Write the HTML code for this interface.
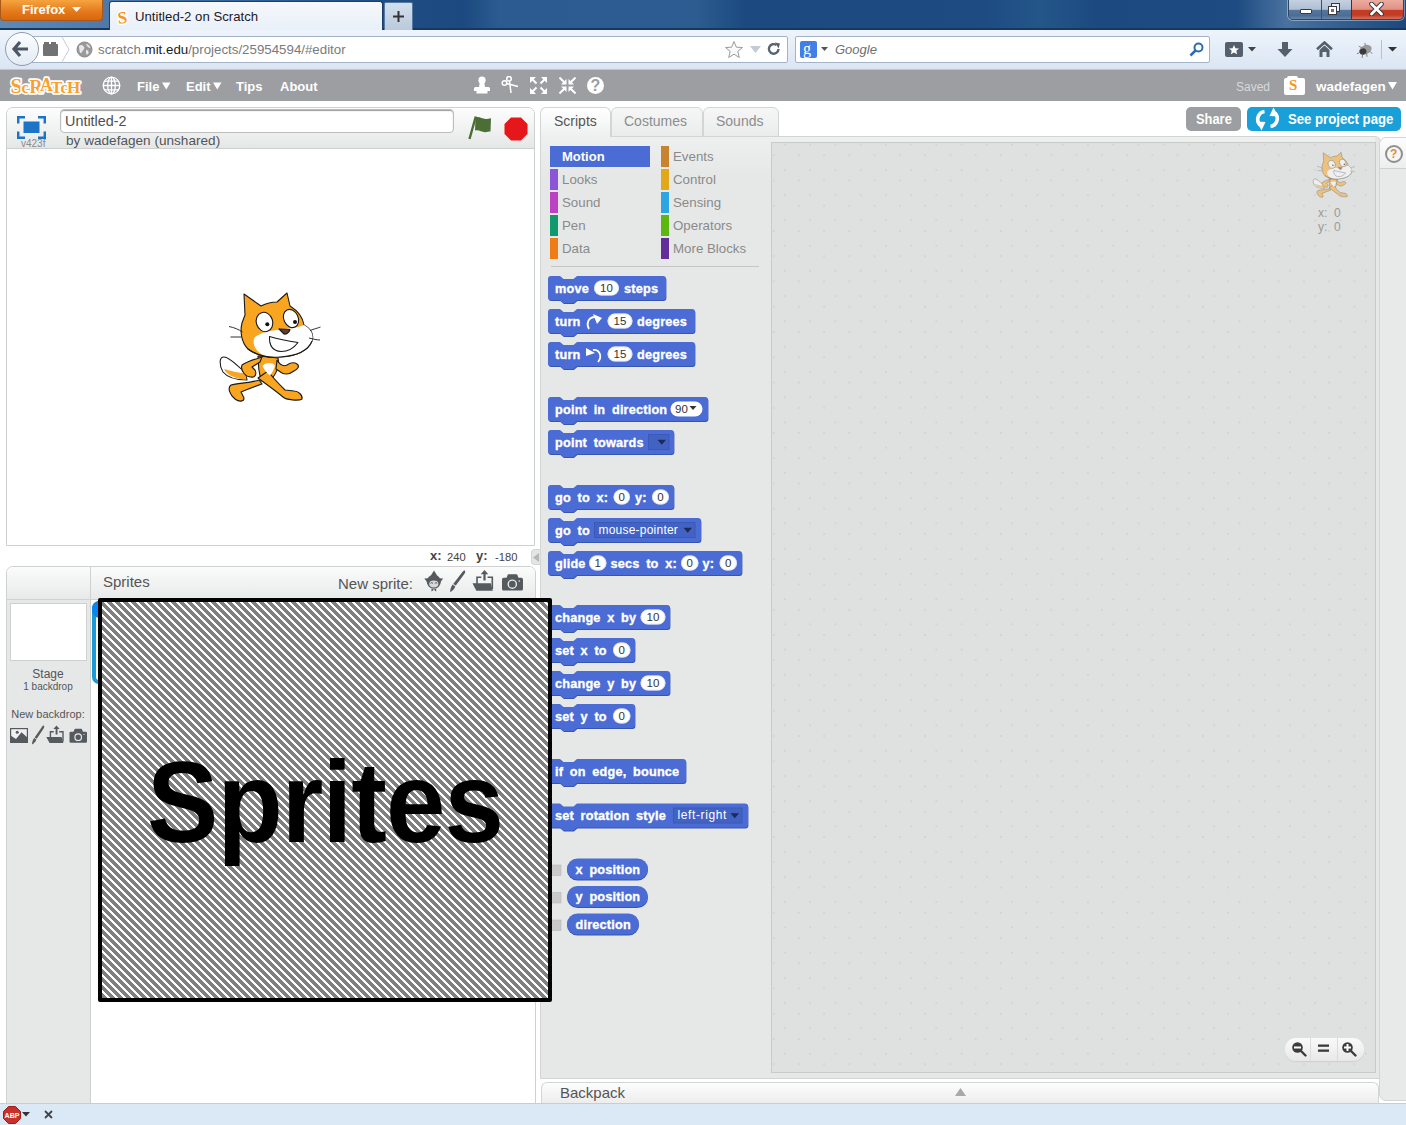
<!DOCTYPE html><html><head><meta charset="utf-8"><title>Scratch</title><style>
*{box-sizing:border-box;margin:0;padding:0}
html,body{width:1406px;height:1125px;overflow:hidden;background:#fff;font-family:"Liberation Sans",sans-serif;position:relative}
.a{position:absolute}
.t{position:absolute;white-space:nowrap;line-height:1}
</style></head><body><div class="a" style="left:0;top:0;width:1406px;height:30px;background:linear-gradient(90deg,#6089b5 0%,#4f7aab 7%,#204d84 27%,#1c4a80 33%,#2b5b90 35.5%,#2c5c90 49.5%,#1c4a80 53%,#1d4b82 70%,#245689 74%,#1c4a80 78%,#1e4c82 88%,#4a72a0 91.5%,#1c487c 100%)"></div><div class="a" style="left:0;top:28px;width:1406px;height:2px;background:#17375e"></div><div class="a" style="left:0;top:0;width:103px;height:21px;border-radius:0 0 4px 4px;background:linear-gradient(#f6a43f,#e3781a 60%,#d8680c);border:1px solid #a9581a;border-top:none"></div><div class="t" style="left:22px;top:3px;font-size:13px;font-weight:bold;color:#fff">Firefox</div><svg class="a" style="left:72px;top:7px" width="9" height="6"><path d="M0,0H9L4.5,5Z" fill="#fff"/></svg><div class="a" style="left:109px;top:1px;width:274px;height:29px;border-radius:3px 3px 0 0;background:linear-gradient(#f5f8fc,#e9f0f8);border:1px solid #1a3f6a;border-bottom:none"></div><svg class="a" style="left:114px;top:5px" width="20" height="22"><text x="3.5" y="18" font-size="17" font-weight="bold" font-family="Liberation Serif" fill="#f7931e" stroke="#fff" stroke-width="3" paint-order="stroke" transform="rotate(-6 10 11)">S</text></svg><div class="t" style="left:135px;top:9.5px;font-size:13.2px;color:#1a1a2a">Untitled-2 on Scratch</div><div class="a" style="left:384px;top:2px;width:29px;height:28px;border-radius:2px 2px 0 0;background:linear-gradient(#d3dfec,#b9cadc);border:1px solid #557aa3;border-bottom:none"></div><svg class="a" style="left:392px;top:10px" width="13" height="13"><path d="M6.5,1V12M1,6.5H12" stroke="#333" stroke-width="2"/></svg><div class="a" style="left:1288px;top:-1px;width:116px;height:21px;border-radius:0 0 5px 5px;border:1px solid #2f4560;overflow:hidden;box-shadow:0 0 0 1px rgba(220,230,240,0.45)"><div class="a" style="left:0;top:0;width:32px;height:20px;background:linear-gradient(#c4d0df 0%,#aebfd3 47%,#56779d 50%,#4d6d94 78%,#6f8db0 100%)"></div><div class="a" style="left:32px;top:0;width:1px;height:20px;background:#3a5272"></div><div class="a" style="left:33px;top:0;width:29px;height:20px;background:linear-gradient(#c4d0df 0%,#aebfd3 47%,#56779d 50%,#4d6d94 78%,#6f8db0 100%)"></div><div class="a" style="left:62px;top:0;width:1px;height:20px;background:#5a2a20"></div><div class="a" style="left:63px;top:0;width:52px;height:20px;background:linear-gradient(#ecaca0 0%,#df9083 47%,#c43c24 50%,#c13b22 75%,#d98070 100%)"></div></div><div class="a" style="left:1300px;top:9px;width:12px;height:5px;background:#fff;border:1px solid #3a3a3a;border-radius:1px"></div><svg class="a" style="left:1327px;top:2px" width="15" height="15"><rect x="4.5" y="1.5" width="8" height="8" fill="#e8eef5" stroke="#3a3a3a" stroke-width="1"/><rect x="1.5" y="4.5" width="8" height="8" fill="#fff" stroke="#3a3a3a" stroke-width="1"/><rect x="4" y="7" width="3" height="3" fill="#56779d"/></svg><svg class="a" style="left:1369px;top:2px" width="15" height="14"><path d="M2.5,2L12.5,12M12.5,2L2.5,12" stroke="#3a3a3a" stroke-width="4.6" stroke-linecap="round"/><path d="M2.5,2L12.5,12M12.5,2L2.5,12" stroke="#fff" stroke-width="2.8" stroke-linecap="round"/></svg><div class="a" style="left:0;top:30px;width:1406px;height:40px;background:linear-gradient(#eef4fb,#e2ebf6 60%,#dae6f3)"></div><div class="a" style="left:0;top:69px;width:1406px;height:1px;background:#b9c6d6"></div><div class="a" style="left:30px;top:36px;width:758px;height:27px;background:#fff;border:1px solid #a4b4c6;border-radius:2px"></div><div class="a" style="left:5px;top:32px;width:34px;height:34px;border-radius:50%;background:linear-gradient(#fbfdff,#e3ebf4);border:1px solid #8d9db0"></div><svg class="a" style="left:11px;top:40px" width="20" height="18"><path d="M9,2L3,9L9,16M3.5,9H17" stroke="#4d5866" stroke-width="3.2" fill="none" stroke-linejoin="miter"/></svg><div class="a" style="left:43px;top:44px;width:15px;height:12px;background:#727272;border-radius:1px"></div><div class="a" style="left:44px;top:42px;width:5px;height:2px;background:#727272"></div><div class="a" style="left:51px;top:42px;width:5px;height:2px;background:#727272"></div><svg class="a" style="left:61px;top:37px" width="10" height="25"><path d="M1,0L8,12.5L1,25" stroke="#c4ccd6" fill="none"/></svg><svg class="a" style="left:76px;top:41px" width="17" height="17"><circle cx="8.5" cy="8.5" r="7.5" fill="#9a9a9a"/><path d="M3,5C5,3 7,4 8,6C9,8 7,9 6,11C5,13 4,12 3.5,10Z M10,3C12,3 14,5 14.5,7C13,7 12,6 11,5Z M10,9C12,9 13,10 12.5,12.5C11.5,14 10,13.5 10,12Z" fill="#e8e8e8"/><circle cx="8.5" cy="8.5" r="7.5" fill="none" stroke="#8a8a8a" stroke-width="1"/></svg><div class="t" style="left:98px;top:43px;font-size:13.3px;color:#7a7a7a">scratch.<span style="color:#1a1a1a">mit.edu</span>/projects/25954594/#editor</div><svg class="a" style="left:724px;top:40px" width="20" height="19"><path d="M10,1.5L12.4,7.2L18.5,7.5L13.8,11.4L15.3,17.5L10,14.2L4.7,17.5L6.2,11.4L1.5,7.5L7.6,7.2Z" fill="#fafafa" stroke="#9a9a9a" stroke-width="1"/></svg><svg class="a" style="left:750px;top:46px" width="11" height="8"><path d="M0,0H11L5.5,7Z" fill="#c2cbd6"/></svg><svg class="a" style="left:767px;top:42px" width="14" height="14"><path d="M11.5,7A4.8,4.8 0 1 1 9.5,3" stroke="#5a6470" stroke-width="2.4" fill="none"/><path d="M8,0.5L13,1.5L11.5,6.5Z" fill="#5a6470"/></svg><div class="a" style="left:795px;top:36px;width:415px;height:27px;background:#fff;border:1px solid #a4b4c6;border-radius:2px"></div><div class="a" style="left:800px;top:41px;width:17px;height:17px;background:#3f7fe6;border-radius:2px"></div><div class="t" style="left:803px;top:41px;font-size:16px;color:#fff;font-family:'Liberation Serif',serif">g</div><svg class="a" style="left:821px;top:47px" width="7" height="5"><path d="M0,0H7L3.5,4Z" fill="#555"/></svg><div class="t" style="left:835px;top:43px;font-size:13px;color:#707070;font-style:italic">Google</div><svg class="a" style="left:1189px;top:42px" width="15" height="15"><circle cx="9.5" cy="5.5" r="4" stroke="#2b6cb4" stroke-width="2" fill="none"/><path d="M6.5,8.5L1.5,13.5" stroke="#2b6cb4" stroke-width="2.5"/></svg><div class="a" style="left:1225px;top:42px;width:18px;height:15px;background:#55606c;border-radius:2px"></div><svg class="a" style="left:1227px;top:43px" width="14" height="13"><path d="M7,2L8.4,5.3L12,5.6L9.3,7.8L10.1,11.3L7,9.4L3.9,11.3L4.7,7.8L2,5.6L5.6,5.3Z" fill="#fff"/></svg><svg class="a" style="left:1248px;top:47px" width="8" height="5"><path d="M0,0H8L4,4.5Z" fill="#444"/></svg><svg class="a" style="left:1277px;top:42px" width="16" height="16"><path d="M5,0H11V7H15.5L8,15L0.5,7H5Z" fill="#55606c"/></svg><svg class="a" style="left:1316px;top:41px" width="17" height="17"><path d="M1,8.2L8.5,1.5L16,8.2" stroke="#55606c" stroke-width="2.6" fill="none"/><path d="M3.5,9L8.5,4.5L13.5,9V16H10.5V11H6.5V16H3.5Z" fill="#55606c"/></svg><svg class="a" style="left:1355px;top:41px" width="20" height="18"><g transform="rotate(-25 10 9)"><ellipse cx="10.5" cy="9" rx="6.5" ry="4.5" fill="#9a9a9a"/><ellipse cx="7.5" cy="9.5" rx="3.5" ry="3" fill="#3a3a3a"/><path d="M4,9H1M6,12L4,15M10,13L9,16M14,12.5L15,15.5M8,5.5L6,3M12,5L13,2.5" stroke="#777" stroke-width="0.8"/></g></svg><div class="a" style="left:1381px;top:40px;width:1px;height:19px;background:#b5c2d0"></div><svg class="a" style="left:1388px;top:47px" width="9" height="5"><path d="M0,0H9L4.5,4.5Z" fill="#333"/></svg><div class="a" style="left:0;top:70px;width:1406px;height:31px;background:#9c9ea2"></div><svg class="a" style="left:0;top:70px" width="90" height="31" viewBox="0 70 90 31"><g font-family="Liberation Serif" font-weight="bold" fill="#f9a12e" stroke="#fff" stroke-width="3.4" stroke-linejoin="round" paint-order="stroke" transform="translate(0,0)"><text x="10.5" y="93" font-size="21">S</text><text x="21.5" y="93" font-size="16">c</text><text x="29.5" y="93" font-size="18">R</text><text x="40" y="91" font-size="18">A</text><text x="51" y="93" font-size="17">T</text><text x="60.5" y="93" font-size="16">c</text><text x="67" y="93" font-size="17">H</text></g></svg><svg class="a" style="left:102px;top:76px" width="19" height="19"><g stroke="#fff" stroke-width="1.3" fill="none"><circle cx="9.5" cy="9.5" r="8.3"/><ellipse cx="9.5" cy="9.5" rx="3.8" ry="8.3"/><path d="M9.5,1.2V17.8M1.2,9.5H17.8M2.6,5.2H16.4M2.6,13.8H16.4"/></g></svg><div class="t" style="left:137px;top:80px;font-size:13px;font-weight:bold;color:#fff">File</div><svg class="a" style="left:162px;top:82px" width="9" height="8"><path d="M0,0.5H8.5L4.25,7.5Z" fill="#fff"/></svg><div class="t" style="left:186px;top:80px;font-size:13px;font-weight:bold;color:#fff">Edit</div><svg class="a" style="left:213px;top:82px" width="9" height="8"><path d="M0,0.5H8.5L4.25,7.5Z" fill="#fff"/></svg><div class="t" style="left:236px;top:80px;font-size:13px;font-weight:bold;color:#fff">Tips</div><div class="t" style="left:280px;top:80px;font-size:13px;font-weight:bold;color:#fff">About</div><svg class="a" style="left:473px;top:76px" width="18" height="19"><g fill="#fff"><circle cx="9" cy="4.2" r="3.6"/><path d="M6.8,6H11.2L12,11H6Z"/><path d="M2.5,11H15.5Q17,11 17,12.5V15H14.5V17.5H3.5V15H1V12.5Q1,11 2.5,11Z"/></g></svg><svg class="a" style="left:501px;top:76px" width="18" height="18"><g stroke="#fff" stroke-width="1.5" fill="none"><circle cx="3.5" cy="7" r="2.3"/><circle cx="8" cy="2.8" r="2.3"/><path d="M5.5,7.5L17,10.5M8.5,5L10,17"/></g></svg><svg class="a" style="left:530px;top:77px" width="17" height="17"><g fill="#fff"><path d="M0,0H6L0,6Z"/><path d="M17,0H11L17,6Z"/><path d="M0,17H6L0,11Z"/><path d="M17,17H11L17,11Z"/></g><g stroke="#fff" stroke-width="2"><path d="M2,2L6.5,6.5M15,2L10.5,6.5M2,15L6.5,10.5M15,15L10.5,10.5"/></g></svg><svg class="a" style="left:559px;top:77px" width="17" height="17"><g fill="#fff"><path d="M7.5,7.5H2L7.5,2Z"/><path d="M9.5,7.5H15L9.5,2Z"/><path d="M7.5,9.5H2L7.5,15Z"/><path d="M9.5,9.5H15L9.5,15Z"/></g><g stroke="#fff" stroke-width="2"><path d="M0.5,0.5L5,5M16.5,0.5L12,5M0.5,16.5L5,12M16.5,16.5L12,12"/></g></svg><div class="a" style="left:587px;top:77px;width:17px;height:17px;border-radius:50%;background:#fff"></div><div class="t" style="left:590.5px;top:78px;font-size:16px;font-weight:bold;color:#9c9ea2">?</div><div class="t" style="left:1236px;top:81px;font-size:12px;color:#d9d9d9">Saved</div><div class="a" style="left:1284px;top:78px;width:21px;height:17px;background:#fff;border-radius:2px"></div><div class="a" style="left:1287px;top:76px;width:11px;height:3px;background:#fff;border-radius:2px 2px 0 0"></div><div class="t" style="left:1289px;top:78px;font-size:15px;font-weight:bold;color:#f7941d;font-family:'Liberation Serif',serif">S</div><div class="t" style="left:1316px;top:80px;font-size:13.5px;font-weight:bold;color:#fff">wadefagen</div><svg class="a" style="left:1388px;top:82px" width="9" height="8"><path d="M0,0H9L4.5,7.5Z" fill="#fff"/></svg><div class="a" style="left:6px;top:107px;width:529px;height:439px;border:1px solid #cfd1d1;border-radius:7px 7px 0 0;background:#fff;overflow:hidden"><div class="a" style="left:0;top:0;width:527px;height:41px;background:linear-gradient(#fdfdfd,#e5e7e7);border-bottom:1px solid #cdd0d0"></div></div><svg class="a" style="left:17px;top:116px" width="29" height="23"><g fill="none" stroke="#1b74c4" stroke-width="2.5"><path d="M1.2,7.5V1.2H8M21,1.2H27.8V7.5M1.2,15.5V21.8H8M21,21.8H27.8V15.5"/></g><rect x="6.5" y="5.5" width="16" height="11.5" fill="#1b74c4"/></svg><div class="t" style="left:21px;top:139px;font-size:10px;color:#8a8a8a">v423f</div><div class="a" style="left:60px;top:109px;width:394px;height:24px;background:#fff;border:1px solid #bdbdbd;border-radius:4px;box-shadow:inset 0 1px 1px #999"></div><div class="t" style="left:65px;top:114px;font-size:14.4px;color:#505050">Untitled-2</div><div class="t" style="left:66px;top:134px;font-size:13.6px;color:#555">by wadefagen (unshared)</div><svg class="a" style="left:467px;top:115px" width="26" height="26"><path d="M8.5,2.5C12,1 15,4 18.5,4C20.5,4 22.5,3.2 24,3.2L23.5,16.5C21.5,16.5 20,17.2 18,17.2C14.5,17.2 12,14.5 8,15.5Z" fill="#4a6e35"/><path d="M8.8,1.5L2.5,24" stroke="#4a6e35" stroke-width="2.4"/></svg><svg class="a" style="left:504px;top:117px" width="24" height="24"><path d="M7,0.5H17L23.5,7V17L17,23.5H7L0.5,17V7Z" fill="#e6171b"/></svg><svg class="a" style="left:210px;top:285px" width="120" height="125" viewBox="0 0 120 125"><g stroke="#1a1a1a" stroke-width="1.1" stroke-linejoin="round">
<path d="M35,87 C28,82 20,72 14,72 C9,72 9,80 13,87 C17,92 26,95 37,95 Z" fill="#fff"/>
<path d="M14.5,85 C18,91 27,94 36.5,94.5 L35,88.5 C28,88 21,86 14.5,84Z" fill="#f9a51f" stroke="none"/>
<path d="M48,71 L68,73 C70,79 67,87 62,94 L51,96 C49,88 48,79 48,71Z" fill="#f9a51f"/>
<path d="M49,95 C40,98 28,98 21,100 C17,103 20,110 25,114 C29,117 34,117 34,113 L31,107 C38,104 46,101 52,99Z" fill="#f9a51f"/>
<path d="M48,93 C56,99 66,106 73,112 C76,115 89,116 92,114 C93,110 88,106 84,106 L75,105 C68,98 62,92 58,86Z" fill="#f9a51f"/>
<path d="M52,72 C46,74 38,76 32,80 C30,86 36,92 41,92 C45,93 47,89 45,85 L42,82 L50,77Z" fill="#f9a51f"/>
<path d="M52.5,81 C55,77.5 62,77 65,80.5 C64,84 62,88 60,90.5 C57,88 54,84.5 52.5,81Z" fill="#fff" stroke="none"/>
<path d="M67,75 C70,80 73,82 77,80 C80,78 84,77 87,79 C90,81 88,84 84,86 C80,89 76,90 72,88 L66,84Z" fill="#f9a51f"/>
<path d="M35,30 L34,9 L51,21 C57,18 62,17 67,17 L77,8 L80,21 C88,26 93,33 94,40 C101,44 104,50 102,56 C98,66 85,71 70,72 C58,73 46,70 38,64 C31,57 30,46 32,38Z" fill="#f9a51f"/>
<path d="M45,52 C52,47 60,46 66,45 C75,44 88,43 94,40 C101,44 104,50 102,56 C98,66 85,71 70,72 C58,73 50,70 46,64 C43,60 43,55 45,52Z" fill="#fff" stroke="none"/>
<path d="M38,64 C46,70 58,73 70,72 C85,71 98,66 102,56" fill="none"/>
<ellipse cx="54.5" cy="37" rx="8.2" ry="9.8" transform="rotate(-18 54.5 37)" fill="#fff"/>
<ellipse cx="81" cy="33.5" rx="7.2" ry="9.5" transform="rotate(-25 81 33.5)" fill="#fff"/>
<circle cx="57.3" cy="39.3" r="2" fill="#111" stroke="none"/>
<circle cx="85" cy="37" r="2" fill="#111" stroke="none"/>
<path d="M69,44 L80,44.5 C79,48 76,49.5 74,49 Z" fill="#5a4036"/>
<path d="M59.5,51.5 C68,54 78,56 88,57.5 C84,63 78,66.5 71,66.5 C64,66 59,62 59.5,51.5Z" fill="#fff"/>
<path d="M19,41.5 C24,42.5 29,44.5 32.5,47 M20.5,52 L31,52 M100,45.5 C104,44 108,43 110.5,42 M99,53 C103,54 107,55 110,55" fill="none" stroke-width="0.9"/>
</g></svg><div class="t" style="left:430px;top:549px;font-size:13px;font-weight:bold;color:#444">x:</div><div class="t" style="left:447px;top:551.5px;font-size:11.2px;color:#444">240</div><div class="t" style="left:476px;top:549px;font-size:13px;font-weight:bold;color:#444">y:</div><div class="t" style="left:495px;top:551.5px;font-size:11.2px;color:#444">-180</div><div class="a" style="left:531px;top:549px;width:10px;height:16px;background:#e4e6e6;border-radius:4px 0 0 4px;border:1px solid #d4d6d6;border-right:none"></div><svg class="a" style="left:533px;top:553px" width="6" height="9"><path d="M6,0V9L0,4.5Z" fill="#b4b6b8"/></svg><div class="a" style="left:6px;top:566px;width:530px;height:538px;border:1px solid #cfd1d1;border-radius:7px 7px 0 0;background:#fff;overflow:hidden"><div class="a" style="left:0;top:0;width:528px;height:33px;background:linear-gradient(#fbfbfb,#e8eaea);border-bottom:1px solid #d0d2d2"></div><div class="a" style="left:0;top:33px;width:83px;height:510px;background:#e6e8e8"></div><div class="a" style="left:83px;top:0;width:1px;height:540px;background:#cfd1d1"></div></div><div class="t" style="left:103px;top:574px;font-size:15px;color:#555">Sprites</div><div class="t" style="left:338px;top:576px;font-size:15px;color:#555">New sprite:</div><svg class="a" style="left:424px;top:570px" width="20" height="22"><path d="M6.3,6.5 L10,0.5 L13.7,6.5Z" fill="#555a5e"/><path d="M0.3,8.5 L5,8.3 L5,14.5Z M19.2,8.5 L14.5,8.3 L14.5,14.5Z" fill="#555a5e"/><circle cx="9.8" cy="11.8" r="7" fill="#555a5e"/><ellipse cx="9.8" cy="14" rx="4.6" ry="3.4" fill="#d9d9d9"/><path d="M6.5,13.2 Q8,12 9,13.4 M10.8,13.4 Q12,12 13.2,13.2" stroke="#555a5e" stroke-width="1" fill="none"/><path d="M7.5,18.5 L10,19.8 L7.5,21.5Z M12.2,18.5 L9.8,19.8 L12.2,21.5Z" fill="#555a5e"/></svg><svg class="a" style="left:449px;top:570px" width="17" height="23"><path d="M15.9,0.7 C16.6,1.3 16.3,2.4 15.3,3.9 L6.8,15.6 L4.2,13.9 L13.4,2.1 C14.4,0.8 15.2,0.2 15.9,0.7Z" fill="#555a5e"/><path d="M3.6,14.6 L6.3,16.4 C5.3,19.2 3.2,21.3 1,22 C1.3,19.6 2,16.6 3.6,14.6Z" fill="#555a5e"/></svg><svg class="a" style="left:472px;top:569px" width="22" height="23"><path d="M12.5,1 L16.3,5.2 H13.6 V11.5 H11.4 V5.2 H8.7 Z" fill="#555a5e"/><path d="M5,15 V8.2 H9.3 M15.6,8.2 H20.3 V20" stroke="#555a5e" stroke-width="1.6" fill="none"/><path d="M0.5,14.3 H18.8 L20.8,21.8 H4.3 Z" fill="#555a5e"/></svg><svg class="a" style="left:501px;top:573px" width="23" height="19"><rect x="1" y="4.8" width="21" height="12.8" rx="1.6" fill="#555a5e"/><path d="M5.3,5.5 L6.8,1.6 Q7,1.2 7.6,1.2 H15.4 Q16,1.2 16.2,1.6 L17.7,5.5Z" fill="#555a5e"/><circle cx="11.3" cy="11.2" r="4.1" fill="none" stroke="#e9e9e9" stroke-width="1.4"/><circle cx="18.3" cy="8" r="0.8" fill="#e9e9e9"/></svg><div class="a" style="left:10px;top:603px;width:77px;height:58px;background:#fff;border:1px solid #cfd1d1"></div><div class="t" style="left:0;top:668px;width:96px;text-align:center;font-size:12px;color:#555">Stage</div><div class="t" style="left:0;top:682px;width:96px;text-align:center;font-size:10px;color:#555">1 backdrop</div><div class="t" style="left:0;top:709px;width:96px;text-align:center;font-size:11px;color:#555">New backdrop:</div><svg class="a" style="left:10px;top:728px" width="18" height="15"><rect x="0.6" y="0.6" width="16.8" height="13.8" fill="#f0f0f0" stroke="#555a5e" stroke-width="1.2"/><path d="M0.6,7.5 L6,11 L11.5,4.3 L17.4,9.5 V14.4 H0.6Z" fill="#555a5e"/><circle cx="7.2" cy="4.2" r="1.5" fill="#555a5e"/></svg><svg class="a" style="left:31px;top:725px" width="14" height="20"><path d="M12.9,0.8 C13.5,1.3 13.3,2.3 12.6,3.6 L5.8,13.8 L3.6,12.4 L10.9,1.9 C11.7,0.8 12.3,0.3 12.9,0.8Z" fill="#555a5e"/><path d="M3.1,13 L5.4,14.6 C4.6,17 2.8,18.8 0.9,19.4 C1.1,17.3 1.8,14.7 3.1,13Z" fill="#555a5e"/></svg><svg class="a" style="left:46px;top:725px" width="19" height="19"><path d="M10.5,0.5 L13.6,4 H11.5 V9.5 H9.6 V4 H7.4 Z" fill="#555a5e"/><path d="M4.4,12.5 V6.8 H7.8 M13.2,6.8 H17 V16.5" stroke="#555a5e" stroke-width="1.4" fill="none"/><path d="M0.3,12 H15.6 L17.4,18 H3.6 Z" fill="#555a5e"/></svg><svg class="a" style="left:69px;top:728px" width="19" height="16"><rect x="0.5" y="3.8" width="17.5" height="11" rx="1.3" fill="#555a5e"/><path d="M4.3,4.4 L5.5,1.2 Q5.7,0.8 6.2,0.8 H12.3 Q12.8,0.8 13,1.2 L14.2,4.4Z" fill="#555a5e"/><circle cx="9.2" cy="9.2" r="3.3" fill="none" stroke="#e9e9e9" stroke-width="1.2"/><circle cx="15" cy="6.5" r="0.6" fill="#e9e9e9"/></svg><div class="a" style="left:92px;top:601px;width:60px;height:83px;border:4px solid #1c9ad6;border-radius:7px;background:#fff"></div><div class="a" style="left:92px;top:601px;width:16px;height:17px;border-radius:8px 0 8px 8px;background:#0a84ee"></div><div class="t" style="left:1196px;top:112px;font-size:14px;font-weight:bold;color:#fff"></div><div class="a" style="left:1186px;top:107px;width:55px;height:24px;border-radius:5px;background:#9c9ea2"></div><div class="t" style="left:1196px;top:112px;font-size:14px;font-weight:bold;color:#fff;transform:scaleX(0.92);transform-origin:0 0">Share</div><div class="a" style="left:1247px;top:107px;width:154px;height:24px;border-radius:5px;background:#1aa0d9"></div><svg class="a" style="left:1253px;top:107px" width="29" height="24"><g fill="none" stroke="#fff" stroke-width="3.6"><path d="M11.5,4.5 A8,8 0 0 0 7,18"/><path d="M17.5,19.5 A8,8 0 0 0 22,6"/></g><g fill="#fff"><path d="M3.5,14.5 L12.5,15 L8.5,23.5Z"/><path d="M25.5,9.5 L16.5,9 L20.5,0.5Z"/></g></svg><div class="t" style="left:1288px;top:112px;font-size:14px;font-weight:bold;color:#fff;transform:scaleX(0.94);transform-origin:0 0">See project page</div><div class="a" style="left:540px;top:136px;width:841px;height:943px;background:#e6e8e8;border:1px solid #d3d5d5;border-radius:0 6px 0 0"></div><div class="a" style="left:541px;top:137px;width:834px;height:40px;background:linear-gradient(#eef0f0,#e6e8e8)"></div><div class="a" style="left:611px;top:107px;width:92px;height:30px;border:1px solid #d3d5d5;border-bottom:1px solid #d3d5d5;border-radius:6px 6px 0 0;background:linear-gradient(#f6f6f6,#eaecec)"></div><div class="t" style="left:624px;top:114px;font-size:14px;color:#8d8d8d">Costumes</div><div class="a" style="left:703px;top:107px;width:76px;height:30px;border:1px solid #d3d5d5;border-bottom:1px solid #d3d5d5;border-radius:6px 6px 0 0;background:linear-gradient(#f6f6f6,#eaecec)"></div><div class="t" style="left:716px;top:114px;font-size:14px;color:#8d8d8d">Sounds</div><div class="a" style="left:540px;top:107px;width:71px;height:30px;border:1px solid #d3d5d5;border-bottom:none;border-radius:6px 6px 0 0;background:linear-gradient(#ffffff,#eef0f0)"></div><div class="t" style="left:554px;top:114px;font-size:14px;color:#555">Scripts</div><div class="a" style="left:542px;top:136px;width:68px;height:2px;background:#eef0f0"></div><div class="a" style="left:550px;top:146px;width:100px;height:21px;background:#4a6cd4"></div><div class="t" style="left:562px;top:150px;font-size:13px;font-weight:bold;color:#fff">Motion</div><div class="a" style="left:550px;top:169px;width:8px;height:21px;background:#8a55d7"></div><div class="t" style="left:562px;top:173px;font-size:13.3px;color:#8a8a8a">Looks</div><div class="a" style="left:550px;top:192px;width:8px;height:21px;background:#bb42c3"></div><div class="t" style="left:562px;top:196px;font-size:13.3px;color:#8a8a8a">Sound</div><div class="a" style="left:550px;top:215px;width:8px;height:21px;background:#0e9a6c"></div><div class="t" style="left:562px;top:219px;font-size:13.3px;color:#8a8a8a">Pen</div><div class="a" style="left:550px;top:238px;width:8px;height:21px;background:#ee7d16"></div><div class="t" style="left:562px;top:242px;font-size:13.3px;color:#8a8a8a">Data</div><div class="a" style="left:661px;top:146px;width:8px;height:21px;background:#c88330"></div><div class="t" style="left:673px;top:150px;font-size:13.3px;color:#8a8a8a">Events</div><div class="a" style="left:661px;top:169px;width:8px;height:21px;background:#e1a91a"></div><div class="t" style="left:673px;top:173px;font-size:13.3px;color:#8a8a8a">Control</div><div class="a" style="left:661px;top:192px;width:8px;height:21px;background:#2ca5e2"></div><div class="t" style="left:673px;top:196px;font-size:13.3px;color:#8a8a8a">Sensing</div><div class="a" style="left:661px;top:215px;width:8px;height:21px;background:#5cb712"></div><div class="t" style="left:673px;top:219px;font-size:13.3px;color:#8a8a8a">Operators</div><div class="a" style="left:661px;top:238px;width:8px;height:21px;background:#632d99"></div><div class="t" style="left:673px;top:242px;font-size:13.3px;color:#8a8a8a">More Blocks</div><div class="a" style="left:551px;top:266px;width:208px;height:1px;background:#c4c6c6"></div><div class="a" style="left:771px;top:142px;width:605px;height:931px;background-color:#dfe0e0;border:1px solid #c9cbcb;background-image:radial-gradient(circle,#d3d4d4 0.9px,transparent 1.3px),radial-gradient(circle,#d3d4d4 0.9px,transparent 1.3px);background-size:25.25px 25.25px,25.25px 25.25px;background-position:0.3px -11px,-11px -0.4px"></div><svg class="a" style="left:1309px;top:149px;opacity:0.5" width="50" height="52" viewBox="0 0 120 125"><g stroke="#1a1a1a" stroke-width="1.1" stroke-linejoin="round">
<path d="M35,87 C28,82 20,72 14,72 C9,72 9,80 13,87 C17,92 26,95 37,95 Z" fill="#fff"/>
<path d="M14.5,85 C18,91 27,94 36.5,94.5 L35,88.5 C28,88 21,86 14.5,84Z" fill="#f9a51f" stroke="none"/>
<path d="M48,71 L68,73 C70,79 67,87 62,94 L51,96 C49,88 48,79 48,71Z" fill="#f9a51f"/>
<path d="M49,95 C40,98 28,98 21,100 C17,103 20,110 25,114 C29,117 34,117 34,113 L31,107 C38,104 46,101 52,99Z" fill="#f9a51f"/>
<path d="M48,93 C56,99 66,106 73,112 C76,115 89,116 92,114 C93,110 88,106 84,106 L75,105 C68,98 62,92 58,86Z" fill="#f9a51f"/>
<path d="M52,72 C46,74 38,76 32,80 C30,86 36,92 41,92 C45,93 47,89 45,85 L42,82 L50,77Z" fill="#f9a51f"/>
<path d="M52.5,81 C55,77.5 62,77 65,80.5 C64,84 62,88 60,90.5 C57,88 54,84.5 52.5,81Z" fill="#fff" stroke="none"/>
<path d="M67,75 C70,80 73,82 77,80 C80,78 84,77 87,79 C90,81 88,84 84,86 C80,89 76,90 72,88 L66,84Z" fill="#f9a51f"/>
<path d="M35,30 L34,9 L51,21 C57,18 62,17 67,17 L77,8 L80,21 C88,26 93,33 94,40 C101,44 104,50 102,56 C98,66 85,71 70,72 C58,73 46,70 38,64 C31,57 30,46 32,38Z" fill="#f9a51f"/>
<path d="M45,52 C52,47 60,46 66,45 C75,44 88,43 94,40 C101,44 104,50 102,56 C98,66 85,71 70,72 C58,73 50,70 46,64 C43,60 43,55 45,52Z" fill="#fff" stroke="none"/>
<path d="M38,64 C46,70 58,73 70,72 C85,71 98,66 102,56" fill="none"/>
<ellipse cx="54.5" cy="37" rx="8.2" ry="9.8" transform="rotate(-18 54.5 37)" fill="#fff"/>
<ellipse cx="81" cy="33.5" rx="7.2" ry="9.5" transform="rotate(-25 81 33.5)" fill="#fff"/>
<circle cx="57.3" cy="39.3" r="2" fill="#111" stroke="none"/>
<circle cx="85" cy="37" r="2" fill="#111" stroke="none"/>
<path d="M69,44 L80,44.5 C79,48 76,49.5 74,49 Z" fill="#5a4036"/>
<path d="M59.5,51.5 C68,54 78,56 88,57.5 C84,63 78,66.5 71,66.5 C64,66 59,62 59.5,51.5Z" fill="#fff"/>
<path d="M19,41.5 C24,42.5 29,44.5 32.5,47 M20.5,52 L31,52 M100,45.5 C104,44 108,43 110.5,42 M99,53 C103,54 107,55 110,55" fill="none" stroke-width="0.9"/>
</g></svg><div class="t" style="left:1318px;top:206px;font-size:12px;color:#9a9a9a;line-height:14px">x:&nbsp; 0<br>y:&nbsp; 0</div><div class="a" style="left:1285px;top:1038px;width:79px;height:23px;border-radius:11px;background:linear-gradient(#fafafa,#e8e8e8);box-shadow:0 1px 1px rgba(0,0,0,0.08)"></div><div class="a" style="left:1310px;top:1038px;width:1px;height:23px;background:#dcdcdc"></div><div class="a" style="left:1337px;top:1038px;width:1px;height:23px;background:#dcdcdc"></div><svg class="a" style="left:1291px;top:1041px" width="16" height="16"><circle cx="6.5" cy="6.5" r="5.3" fill="#3c3c3c"/><path d="M10,10L14.5,14.5" stroke="#3c3c3c" stroke-width="2.4" stroke-linecap="round"/><rect x="3" y="5.5" width="7" height="2" fill="#fff"/></svg><svg class="a" style="left:1317px;top:1043px" width="13" height="11"><rect x="1" y="1.5" width="11" height="2.3" fill="#3c3c3c"/><rect x="1" y="6.5" width="11" height="2.3" fill="#3c3c3c"/></svg><svg class="a" style="left:1341px;top:1041px" width="16" height="16"><circle cx="6.5" cy="6.5" r="5.3" fill="#3c3c3c"/><path d="M10,10L14.5,14.5" stroke="#3c3c3c" stroke-width="2.4" stroke-linecap="round"/><rect x="3" y="5.5" width="7" height="2" fill="#fff"/><rect x="5.5" y="3" width="2" height="7" fill="#fff"/></svg><div class="a" style="left:1379px;top:137px;width:40px;height:964px;border:1px solid #d3d5d5;border-radius:7px 0 0 7px;background:#e8eaea;overflow:hidden"><div class="a" style="left:0;top:0;width:40px;height:31px;background:linear-gradient(#fdfdfd,#eceeee);border-bottom:1px solid #cfd1d1"></div></div><div class="a" style="left:1385px;top:145px;width:18px;height:18px;border-radius:50%;border:2px solid #8f8f8f;background:#f6f6f6"></div><div class="t" style="left:1390px;top:148px;font-size:12px;font-weight:bold;color:#d9913a">?</div><div class="a" style="left:541px;top:1082px;width:838px;height:22px;border:1px solid #d3d5d5;border-bottom:none;border-radius:6px 6px 0 0;background:linear-gradient(#fdfdfd,#ececec)"></div><div class="t" style="left:560px;top:1085px;font-size:15px;color:#555">Backpack</div><svg class="a" style="left:955px;top:1088px" width="11" height="8"><path d="M0,8H11L5.5,0Z" fill="#a8a8a8"/></svg><div class="a" style="left:0;top:1103px;width:1406px;height:22px;background:#dbe8f6;border-top:1px solid #c0cedd"></div><svg class="a" style="left:3px;top:1106px" width="18" height="18"><path d="M5.5,0.5H12.5L17.5,5.5V12.5L12.5,17.5H5.5L0.5,12.5V5.5Z" fill="#c8312b" stroke="#a01f1a"/><text x="9" y="12" text-anchor="middle" font-size="7" font-weight="bold" fill="#fff" font-family="Liberation Sans">ABP</text></svg><svg class="a" style="left:22px;top:1112px" width="8" height="5"><path d="M0,0H8L4,4.5Z" fill="#333"/></svg><svg class="a" style="left:44px;top:1110px" width="9" height="9"><path d="M1,1L8,8M8,1L1,8" stroke="#444" stroke-width="1.8"/></svg><svg class="a" style="left:0;top:0" width="1406" height="1125" font-family="Liberation Sans"><path d="M548,279 Q548,276 551,276 L560,276 L563.5,279 L573.5,279 L577,276 L663,276 Q666,276 666,279 L666,297 Q666,300 663,300 L577,300 L573.5,303 L563.5,303 L560,300 L551,300 Q548,300 548,297 Z" fill="#3555b3" transform="translate(0.4,1)"/><path d="M548,279 Q548,276 551,276 L560,276 L563.5,279 L573.5,279 L577,276 L663,276 Q666,276 666,279 L666,297 Q666,300 663,300 L577,300 L573.5,303 L563.5,303 L560,300 L551,300 Q548,300 548,297 Z" fill="#4a6cd4"/><text x="555" y="292.5" font-size="12.7" font-weight="bold" fill="#fff" stroke="#fff" stroke-width="0.35" letter-spacing="0.2" word-spacing="2.9">move</text><rect x="594" y="280.5" width="25" height="15" rx="7.5" fill="#fff"/><rect x="594.5" y="280.8" width="24" height="14.4" rx="7.0" fill="none" stroke="#c9cfe0" stroke-width="0.6"/><text x="606.5" y="292" font-size="11.5" fill="#333" text-anchor="middle">10</text><text x="624" y="292.5" font-size="12.7" font-weight="bold" fill="#fff" stroke="#fff" stroke-width="0.35" letter-spacing="0.2" word-spacing="2.9">steps</text><path d="M548,312 Q548,309 551,309 L560,309 L563.5,312 L573.5,312 L577,309 L692,309 Q695,309 695,312 L695,330 Q695,333 692,333 L577,333 L573.5,336 L563.5,336 L560,333 L551,333 Q548,333 548,330 Z" fill="#3555b3" transform="translate(0.4,1)"/><path d="M548,312 Q548,309 551,309 L560,309 L563.5,312 L573.5,312 L577,309 L692,309 Q695,309 695,312 L695,330 Q695,333 692,333 L577,333 L573.5,336 L563.5,336 L560,333 L551,333 Q548,333 548,330 Z" fill="#4a6cd4"/><text x="555" y="325.5" font-size="12.7" font-weight="bold" fill="#fff" stroke="#fff" stroke-width="0.35" letter-spacing="0.2" word-spacing="2.9">turn</text><rect x="607.5" y="313.5" width="25.0" height="15" rx="7.5" fill="#fff"/><rect x="608.0" y="313.8" width="24.0" height="14.4" rx="7.0" fill="none" stroke="#c9cfe0" stroke-width="0.6"/><text x="620.0" y="325" font-size="11.5" fill="#333" text-anchor="middle">15</text><text x="637" y="325.5" font-size="12.7" font-weight="bold" fill="#fff" stroke="#fff" stroke-width="0.35" letter-spacing="0.2" word-spacing="2.9">degrees</text><path d="M589,329 C586,324 588,317 595,317" stroke="#fff" stroke-width="1.8" fill="none"/><path d="M593,314 L602,318 L597,324 Z" fill="#fff"/><path d="M548,345 Q548,342 551,342 L560,342 L563.5,345 L573.5,345 L577,342 L692,342 Q695,342 695,345 L695,363 Q695,366 692,366 L577,366 L573.5,369 L563.5,369 L560,366 L551,366 Q548,366 548,363 Z" fill="#3555b3" transform="translate(0.4,1)"/><path d="M548,345 Q548,342 551,342 L560,342 L563.5,345 L573.5,345 L577,342 L692,342 Q695,342 695,345 L695,363 Q695,366 692,366 L577,366 L573.5,369 L563.5,369 L560,366 L551,366 Q548,366 548,363 Z" fill="#4a6cd4"/><text x="555" y="358.5" font-size="12.7" font-weight="bold" fill="#fff" stroke="#fff" stroke-width="0.35" letter-spacing="0.2" word-spacing="2.9">turn</text><rect x="607.5" y="346.5" width="25.0" height="15" rx="7.5" fill="#fff"/><rect x="608.0" y="346.8" width="24.0" height="14.4" rx="7.0" fill="none" stroke="#c9cfe0" stroke-width="0.6"/><text x="620.0" y="358" font-size="11.5" fill="#333" text-anchor="middle">15</text><text x="637" y="358.5" font-size="12.7" font-weight="bold" fill="#fff" stroke="#fff" stroke-width="0.35" letter-spacing="0.2" word-spacing="2.9">degrees</text><path d="M593,350 C599,349 603,356 598,362" stroke="#fff" stroke-width="1.8" fill="none"/><path d="M586,348 L586,356 L595,353 Z" fill="#fff"/><path d="M548,400 Q548,397 551,397 L560,397 L563.5,400 L573.5,400 L577,397 L705,397 Q708,397 708,400 L708,418 Q708,421 705,421 L577,421 L573.5,424 L563.5,424 L560,421 L551,421 Q548,421 548,418 Z" fill="#3555b3" transform="translate(0.4,1)"/><path d="M548,400 Q548,397 551,397 L560,397 L563.5,400 L573.5,400 L577,397 L705,397 Q708,397 708,400 L708,418 Q708,421 705,421 L577,421 L573.5,424 L563.5,424 L560,421 L551,421 Q548,421 548,418 Z" fill="#4a6cd4"/><text x="555" y="413.5" font-size="12.7" font-weight="bold" fill="#fff" stroke="#fff" stroke-width="0.35" letter-spacing="0.2" word-spacing="2.9">point in direction</text><rect x="670.5" y="401.5" width="32" height="15" rx="7.5" fill="#fff"/><text x="675" y="413" font-size="11.5" fill="#333">90</text><path d="M689.5,406 h7 l-3.5,4 z" fill="#333"/><path d="M548,433 Q548,430 551,430 L560,430 L563.5,433 L573.5,433 L577,430 L671,430 Q674,430 674,433 L674,451 Q674,454 671,454 L577,454 L573.5,457 L563.5,457 L560,454 L551,454 Q548,454 548,451 Z" fill="#3555b3" transform="translate(0.4,1)"/><path d="M548,433 Q548,430 551,430 L560,430 L563.5,433 L573.5,433 L577,430 L671,430 Q674,430 674,433 L674,451 Q674,454 671,454 L577,454 L573.5,457 L563.5,457 L560,454 L551,454 Q548,454 548,451 Z" fill="#4a6cd4"/><text x="555" y="446.5" font-size="12.7" font-weight="bold" fill="#fff" stroke="#fff" stroke-width="0.35" letter-spacing="0.2" word-spacing="2.9">point towards</text><rect x="648.5" y="434.5" width="20.5" height="15.0" fill="#4262c4" stroke="#3a58b4" stroke-width="1"/><path d="M657.5,439.7 h8.5 l-4.25,5 z" fill="#1d2a55"/><path d="M548,488 Q548,485 551,485 L560,485 L563.5,488 L573.5,488 L577,485 L671,485 Q674,485 674,488 L674,506 Q674,509 671,509 L577,509 L573.5,512 L563.5,512 L560,509 L551,509 Q548,509 548,506 Z" fill="#3555b3" transform="translate(0.4,1)"/><path d="M548,488 Q548,485 551,485 L560,485 L563.5,488 L573.5,488 L577,485 L671,485 Q674,485 674,488 L674,506 Q674,509 671,509 L577,509 L573.5,512 L563.5,512 L560,509 L551,509 Q548,509 548,506 Z" fill="#4a6cd4"/><text x="555" y="501.5" font-size="12.7" font-weight="bold" fill="#fff" stroke="#fff" stroke-width="0.35" letter-spacing="0.2" word-spacing="2.9">go to x:</text><rect x="613.5" y="489.5" width="16.5" height="15" rx="7.5" fill="#fff"/><rect x="614.0" y="489.8" width="15.5" height="14.4" rx="7.0" fill="none" stroke="#c9cfe0" stroke-width="0.6"/><text x="621.75" y="501" font-size="11.5" fill="#333" text-anchor="middle">0</text><text x="635" y="501.5" font-size="12.7" font-weight="bold" fill="#fff" stroke="#fff" stroke-width="0.35" letter-spacing="0.2" word-spacing="2.9">y:</text><rect x="652" y="489.5" width="17" height="15" rx="7.5" fill="#fff"/><rect x="652.5" y="489.8" width="16" height="14.4" rx="7.0" fill="none" stroke="#c9cfe0" stroke-width="0.6"/><text x="660.5" y="501" font-size="11.5" fill="#333" text-anchor="middle">0</text><path d="M548,521 Q548,518 551,518 L560,518 L563.5,521 L573.5,521 L577,518 L698,518 Q701,518 701,521 L701,539 Q701,542 698,542 L577,542 L573.5,545 L563.5,545 L560,542 L551,542 Q548,542 548,539 Z" fill="#3555b3" transform="translate(0.4,1)"/><path d="M548,521 Q548,518 551,518 L560,518 L563.5,521 L573.5,521 L577,518 L698,518 Q701,518 701,521 L701,539 Q701,542 698,542 L577,542 L573.5,545 L563.5,545 L560,542 L551,542 Q548,542 548,539 Z" fill="#4a6cd4"/><text x="555" y="534.5" font-size="12.7" font-weight="bold" fill="#fff" stroke="#fff" stroke-width="0.35" letter-spacing="0.2" word-spacing="2.9">go to</text><rect x="594.5" y="522.5" width="100.5" height="15.0" fill="#4262c4" stroke="#3a58b4" stroke-width="1"/><text x="598.5" y="533.7" font-size="12" fill="#fff" letter-spacing="0.22">mouse-pointer</text><path d="M683.5,527.7 h8.5 l-4.25,5 z" fill="#1d2a55"/><path d="M548,554 Q548,551 551,551 L560,551 L563.5,554 L573.5,554 L577,551 L739,551 Q742,551 742,554 L742,572 Q742,575 739,575 L577,575 L573.5,578 L563.5,578 L560,575 L551,575 Q548,575 548,572 Z" fill="#3555b3" transform="translate(0.4,1)"/><path d="M548,554 Q548,551 551,551 L560,551 L563.5,554 L573.5,554 L577,551 L739,551 Q742,551 742,554 L742,572 Q742,575 739,575 L577,575 L573.5,578 L563.5,578 L560,575 L551,575 Q548,575 548,572 Z" fill="#4a6cd4"/><text x="555" y="567.5" font-size="12.7" font-weight="bold" fill="#fff" stroke="#fff" stroke-width="0.35" letter-spacing="0.2" word-spacing="2.9">glide</text><rect x="589" y="555.5" width="17.5" height="15" rx="7.5" fill="#fff"/><rect x="589.5" y="555.8" width="16.5" height="14.4" rx="7.0" fill="none" stroke="#c9cfe0" stroke-width="0.6"/><text x="597.75" y="567" font-size="11.5" fill="#333" text-anchor="middle">1</text><text x="610.5" y="567.5" font-size="12.7" font-weight="bold" fill="#fff" stroke="#fff" stroke-width="0.35" letter-spacing="0.2" word-spacing="2.9">secs to x:</text><rect x="681" y="555.5" width="17.5" height="15" rx="7.5" fill="#fff"/><rect x="681.5" y="555.8" width="16.5" height="14.4" rx="7.0" fill="none" stroke="#c9cfe0" stroke-width="0.6"/><text x="689.75" y="567" font-size="11.5" fill="#333" text-anchor="middle">0</text><text x="702.5" y="567.5" font-size="12.7" font-weight="bold" fill="#fff" stroke="#fff" stroke-width="0.35" letter-spacing="0.2" word-spacing="2.9">y:</text><rect x="719.5" y="555.5" width="17.5" height="15" rx="7.5" fill="#fff"/><rect x="720.0" y="555.8" width="16.5" height="14.4" rx="7.0" fill="none" stroke="#c9cfe0" stroke-width="0.6"/><text x="728.25" y="567" font-size="11.5" fill="#333" text-anchor="middle">0</text><path d="M548,608 Q548,605 551,605 L560,605 L563.5,608 L573.5,608 L577,605 L667,605 Q670,605 670,608 L670,626 Q670,629 667,629 L577,629 L573.5,632 L563.5,632 L560,629 L551,629 Q548,629 548,626 Z" fill="#3555b3" transform="translate(0.4,1)"/><path d="M548,608 Q548,605 551,605 L560,605 L563.5,608 L573.5,608 L577,605 L667,605 Q670,605 670,608 L670,626 Q670,629 667,629 L577,629 L573.5,632 L563.5,632 L560,629 L551,629 Q548,629 548,626 Z" fill="#4a6cd4"/><text x="555" y="621.5" font-size="12.7" font-weight="bold" fill="#fff" stroke="#fff" stroke-width="0.35" letter-spacing="0.2" word-spacing="2.9">change x by</text><rect x="640.5" y="609.5" width="25.0" height="15" rx="7.5" fill="#fff"/><rect x="641.0" y="609.8" width="24.0" height="14.4" rx="7.0" fill="none" stroke="#c9cfe0" stroke-width="0.6"/><text x="653.0" y="621" font-size="11.5" fill="#333" text-anchor="middle">10</text><path d="M548,641 Q548,638 551,638 L560,638 L563.5,641 L573.5,641 L577,638 L632,638 Q635,638 635,641 L635,659 Q635,662 632,662 L577,662 L573.5,665 L563.5,665 L560,662 L551,662 Q548,662 548,659 Z" fill="#3555b3" transform="translate(0.4,1)"/><path d="M548,641 Q548,638 551,638 L560,638 L563.5,641 L573.5,641 L577,638 L632,638 Q635,638 635,641 L635,659 Q635,662 632,662 L577,662 L573.5,665 L563.5,665 L560,662 L551,662 Q548,662 548,659 Z" fill="#4a6cd4"/><text x="555" y="654.5" font-size="12.7" font-weight="bold" fill="#fff" stroke="#fff" stroke-width="0.35" letter-spacing="0.2" word-spacing="2.9">set x to</text><rect x="613" y="642.5" width="17.5" height="15" rx="7.5" fill="#fff"/><rect x="613.5" y="642.8" width="16.5" height="14.4" rx="7.0" fill="none" stroke="#c9cfe0" stroke-width="0.6"/><text x="621.75" y="654" font-size="11.5" fill="#333" text-anchor="middle">0</text><path d="M548,674 Q548,671 551,671 L560,671 L563.5,674 L573.5,674 L577,671 L667,671 Q670,671 670,674 L670,692 Q670,695 667,695 L577,695 L573.5,698 L563.5,698 L560,695 L551,695 Q548,695 548,692 Z" fill="#3555b3" transform="translate(0.4,1)"/><path d="M548,674 Q548,671 551,671 L560,671 L563.5,674 L573.5,674 L577,671 L667,671 Q670,671 670,674 L670,692 Q670,695 667,695 L577,695 L573.5,698 L563.5,698 L560,695 L551,695 Q548,695 548,692 Z" fill="#4a6cd4"/><text x="555" y="687.5" font-size="12.7" font-weight="bold" fill="#fff" stroke="#fff" stroke-width="0.35" letter-spacing="0.2" word-spacing="2.9">change y by</text><rect x="640.5" y="675.5" width="25.0" height="15" rx="7.5" fill="#fff"/><rect x="641.0" y="675.8" width="24.0" height="14.4" rx="7.0" fill="none" stroke="#c9cfe0" stroke-width="0.6"/><text x="653.0" y="687" font-size="11.5" fill="#333" text-anchor="middle">10</text><path d="M548,707 Q548,704 551,704 L560,704 L563.5,707 L573.5,707 L577,704 L632,704 Q635,704 635,707 L635,725 Q635,728 632,728 L577,728 L573.5,731 L563.5,731 L560,728 L551,728 Q548,728 548,725 Z" fill="#3555b3" transform="translate(0.4,1)"/><path d="M548,707 Q548,704 551,704 L560,704 L563.5,707 L573.5,707 L577,704 L632,704 Q635,704 635,707 L635,725 Q635,728 632,728 L577,728 L573.5,731 L563.5,731 L560,728 L551,728 Q548,728 548,725 Z" fill="#4a6cd4"/><text x="555" y="720.5" font-size="12.7" font-weight="bold" fill="#fff" stroke="#fff" stroke-width="0.35" letter-spacing="0.2" word-spacing="2.9">set y to</text><rect x="613" y="708.5" width="17.5" height="15" rx="7.5" fill="#fff"/><rect x="613.5" y="708.8" width="16.5" height="14.4" rx="7.0" fill="none" stroke="#c9cfe0" stroke-width="0.6"/><text x="621.75" y="720" font-size="11.5" fill="#333" text-anchor="middle">0</text><path d="M548,762 Q548,759 551,759 L560,759 L563.5,762 L573.5,762 L577,759 L683,759 Q686,759 686,762 L686,780 Q686,783 683,783 L577,783 L573.5,786 L563.5,786 L560,783 L551,783 Q548,783 548,780 Z" fill="#3555b3" transform="translate(0.4,1)"/><path d="M548,762 Q548,759 551,759 L560,759 L563.5,762 L573.5,762 L577,759 L683,759 Q686,759 686,762 L686,780 Q686,783 683,783 L577,783 L573.5,786 L563.5,786 L560,783 L551,783 Q548,783 548,780 Z" fill="#4a6cd4"/><text x="555" y="775.5" font-size="12.7" font-weight="bold" fill="#fff" stroke="#fff" stroke-width="0.35" letter-spacing="0.2" word-spacing="2.9">if on edge, bounce</text><path d="M548,806.5 Q548,803.5 551,803.5 L560,803.5 L563.5,806.5 L573.5,806.5 L577,803.5 L745,803.5 Q748,803.5 748,806.5 L748,824.5 Q748,827.5 745,827.5 L577,827.5 L573.5,830.5 L563.5,830.5 L560,827.5 L551,827.5 Q548,827.5 548,824.5 Z" fill="#3555b3" transform="translate(0.4,1)"/><path d="M548,806.5 Q548,803.5 551,803.5 L560,803.5 L563.5,806.5 L573.5,806.5 L577,803.5 L745,803.5 Q748,803.5 748,806.5 L748,824.5 Q748,827.5 745,827.5 L577,827.5 L573.5,830.5 L563.5,830.5 L560,827.5 L551,827.5 Q548,827.5 548,824.5 Z" fill="#4a6cd4"/><text x="555" y="820.0" font-size="12.7" font-weight="bold" fill="#fff" stroke="#fff" stroke-width="0.35" letter-spacing="0.2" word-spacing="2.9">set rotation style</text><rect x="673.5" y="808.0" width="68.5" height="15.0" fill="#4262c4" stroke="#3a58b4" stroke-width="1"/><text x="677.5" y="819.2" font-size="12" fill="#fff" letter-spacing="0.62">left-right</text><path d="M730.5,813.2 h8.5 l-4.25,5 z" fill="#1d2a55"/><rect x="550" y="865.0" width="11" height="10.5" fill="#c9c9ca" stroke="#b8b8b8" stroke-width="0.6"/><rect x="567" y="859.5" width="81" height="21.0" rx="10.5" fill="#3555b3"/><rect x="567" y="858.5" width="81" height="21.0" rx="10.5" fill="#4a6cd4"/><text x="575.5" y="873.5" font-size="12.7" font-weight="bold" fill="#fff" stroke="#fff" stroke-width="0.35" letter-spacing="0.2" word-spacing="2.9">x position</text><rect x="550" y="892.5" width="11" height="10.5" fill="#c9c9ca" stroke="#b8b8b8" stroke-width="0.6"/><rect x="567" y="887" width="81" height="21" rx="10.5" fill="#3555b3"/><rect x="567" y="886" width="81" height="21" rx="10.5" fill="#4a6cd4"/><text x="575.5" y="901" font-size="12.7" font-weight="bold" fill="#fff" stroke="#fff" stroke-width="0.35" letter-spacing="0.2" word-spacing="2.9">y position</text><rect x="550" y="920.0" width="11" height="10.5" fill="#c9c9ca" stroke="#b8b8b8" stroke-width="0.6"/><rect x="567" y="914.5" width="72" height="21.0" rx="10.5" fill="#3555b3"/><rect x="567" y="913.5" width="72" height="21.0" rx="10.5" fill="#4a6cd4"/><text x="575.5" y="928.5" font-size="12.7" font-weight="bold" fill="#fff" stroke="#fff" stroke-width="0.35" letter-spacing="0.2" word-spacing="2.9">direction</text></svg><div class="a" style="left:98px;top:598px;width:454px;height:404px;border:4px solid #000;border-radius:2px;background:repeating-linear-gradient(45deg,#808080 0px,#808080 3.6px,#ffffff 3.6px,#ffffff 5.66px);overflow:hidden"></div><div class="t" style="left:147px;top:745px;font-size:115px;font-weight:bold;color:#000;transform:scaleX(0.93);transform-origin:0 0;letter-spacing:-1px">Sprites</div></body></html>
